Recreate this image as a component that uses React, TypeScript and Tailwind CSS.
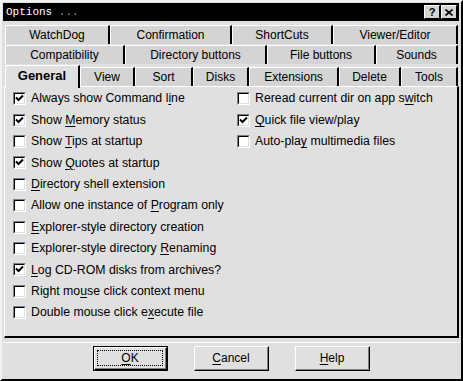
import React from 'react';

type Tab = { label: string; w: string };

const ROW1: Tab[] = [
  { label: 'WatchDog', w: 'w-[105px]' },
  { label: 'Confirmation', w: 'w-[122px]' },
  { label: 'ShortCuts', w: 'w-[101px]' },
  { label: 'Viewer/Editor', w: 'w-[125px]' },
];

const ROW2: Tab[] = [
  { label: 'Compatibility', w: 'w-[120px]' },
  { label: 'Directory buttons', w: 'w-[142px]' },
  { label: 'File buttons', w: 'w-[109px]' },
  { label: 'Sounds', w: 'w-[82px]' },
];

const ROW3: Tab[] = [
  { label: 'View', w: 'w-[55px]' },
  { label: 'Sort', w: 'w-[58px]' },
  { label: 'Disks', w: 'w-[56px]' },
  { label: 'Extensions', w: 'w-[90px]' },
  { label: 'Delete', w: 'w-[62px]' },
  { label: 'Tools', w: 'w-[57px]' },
];

// [before, mnemonic, after, checked]
type Opt = [string, string, string, boolean];

const LEFT: Opt[] = [
  ['Always show Command l', 'i', 'ne', true],
  ['Show ', 'M', 'emory status', true],
  ['Show ', 'T', 'ips at startup', false],
  ['Show ', 'Q', 'uotes at startup', true],
  ['', 'D', 'irectory shell extension', false],
  ['Allow one instance of ', 'P', 'rogram only', false],
  ['', 'E', 'xplorer-style directory creation', false],
  ['Explorer-style directory ', 'R', 'enaming', false],
  ['', 'L', 'og CD-ROM disks from archives?', true],
  ['Right mo', 'u', 'se click context menu', false],
  ['Double mouse click e', 'x', 'ecute file', false],
];

const RIGHT: Opt[] = [
  ['Reread current dir on app s', 'w', 'itch', false],
  ['', 'Q', 'uick file view/play', true],
  ['Auto-pla', 'y', ' multimedia files', false],
];

function TabButton({ tab }: { tab: Tab }) {
  return (
    <div
      className={`${tab.w} h-[19px] shrink-0 bg-[#d4d4d4] border-t border-l border-white border-r-2 border-r-black flex items-center justify-center`}
    >
      {tab.label}
    </div>
  );
}

function CheckBox({ checked }: { checked: boolean }) {
  return (
    <span className="w-[13px] h-[13px] shrink-0 border-t border-l border-t-[#808080] border-l-[#808080] border-b border-r border-b-white border-r-white">
      <span className="block w-[11px] h-[11px] bg-white border-t border-l border-t-black border-l-black border-b border-r border-b-[#dfdfdf] border-r-[#dfdfdf]">
        {checked && (
          <svg width="9" height="9" viewBox="0 0 9 9" className="block">
            <path d="M1 3.5 L3.5 6 L8 1.5" stroke="#000" strokeWidth="2" fill="none" />
          </svg>
        )}
      </span>
    </span>
  );
}

function Option({ opt }: { opt: Opt }) {
  const [a, m, b, checked] = opt;
  return (
    <div className="h-[21.4px] flex items-center gap-[5px]">
      <CheckBox checked={checked} />
      <span className="whitespace-nowrap">
        {a}
        <span className="underline underline-offset-2">{m}</span>
        {b}
      </span>
    </div>
  );
}

function DlgButton({ label, mn, primary }: { label: string; mn: string; primary?: boolean }) {
  const rest = label.slice(1);
  return (
    <div
      className={`w-[75px] h-[25px] ${primary ? 'border border-black' : ''}`}
    >
      <div className="w-full h-full border-t border-l border-white border-b border-r border-b-black border-r-black">
        <div className="w-full h-full border-b border-r border-b-[#808080] border-r-[#808080] flex items-center justify-center p-[2px]">
          <div
            className={`w-full h-full flex items-center justify-center ${primary ? 'border border-dotted border-black' : ''}`}
          >
            <span className="underline underline-offset-2">{mn}</span>
            {rest}
          </div>
        </div>
      </div>
    </div>
  );
}

export default function App() {
  return (
    <div
      className="w-[463px] h-[381px] bg-[#e0e0e0] border-t-2 border-l-2 border-[#f2f2f2] border-r-2 border-r-black border-b-2 border-b-black flex flex-col text-[12px] text-black"
      style={{ fontFamily: '"Liberation Sans", Arial, sans-serif' }}
    >
      {/* title bar */}
      <div className="mt-[1px] ml-[1px] w-[456px] h-[18px] bg-black flex items-center pl-[3px] pr-[2px]">
        <span
          className="text-white text-[11px] leading-none"
          style={{ fontFamily: '"Liberation Mono", "DejaVu Sans Mono", monospace' }}
        >
          Options<span className="text-[#9a9a9a]"> ...</span>
        </span>
        <div className="ml-auto flex gap-[1px]">
          <div className="w-[16px] h-[14px] bg-[#d4d4d4] border-t border-l border-white border-b border-r border-b-black border-r-black flex items-center justify-center font-bold text-[11px] leading-none">
            ?
          </div>
          <div className="w-[16px] h-[14px] bg-[#d4d4d4] border-t border-l border-white border-b border-r border-b-black border-r-black flex items-center justify-center">
            <svg width="8" height="7" viewBox="0 0 8 7">
              <path d="M0.5 0.5 L7.5 6.5 M7.5 0.5 L0.5 6.5" stroke="#000" strokeWidth="1.6" />
            </svg>
          </div>
        </div>
      </div>

      {/* tabs */}
      <div className="mt-[4px] ml-[3px] flex flex-col gap-[1px]">
        <div className="flex">
          {ROW1.map((t) => (
            <TabButton key={t.label} tab={t} />
          ))}
        </div>
        <div className="flex">
          {ROW2.map((t) => (
            <TabButton key={t.label} tab={t} />
          ))}
        </div>
        <div className="flex items-end h-[21px] relative z-10">
          <div className="w-[75px] h-[23px] -mb-[2px] shrink-0 bg-[#e0e0e0] border-t border-l border-white border-r-2 border-r-black flex items-center justify-center font-bold text-[13px] pb-[2px]">
            General
          </div>
          {ROW3.map((t) => (
            <TabButton key={t.label} tab={t} />
          ))}
        </div>
      </div>

      {/* panel */}
      <div className="ml-[2px] w-[455px] h-[252px] border-t border-l border-white border-r-2 border-b-2 border-r-black border-b-black flex pt-[1px]">
        <div className="w-[224px] pl-[8px] text-[12.3px]">
          {LEFT.map((o) => (
            <Option key={o[0] + o[2]} opt={o} />
          ))}
        </div>
        <div className="pl-[8px] text-[12.3px]">
          {RIGHT.map((o) => (
            <Option key={o[0] + o[2]} opt={o} />
          ))}
        </div>
      </div>

      {/* buttons */}
      <div className="mt-[4px] ml-[1px] w-[457px] border-t border-white flex-1 flex justify-center gap-[26px] pt-[3px]">
        <DlgButton label="OK" mn="O" primary />
        <DlgButton label="Cancel" mn="C" />
        <DlgButton label="Help" mn="H" />
      </div>
    </div>
  );
}
